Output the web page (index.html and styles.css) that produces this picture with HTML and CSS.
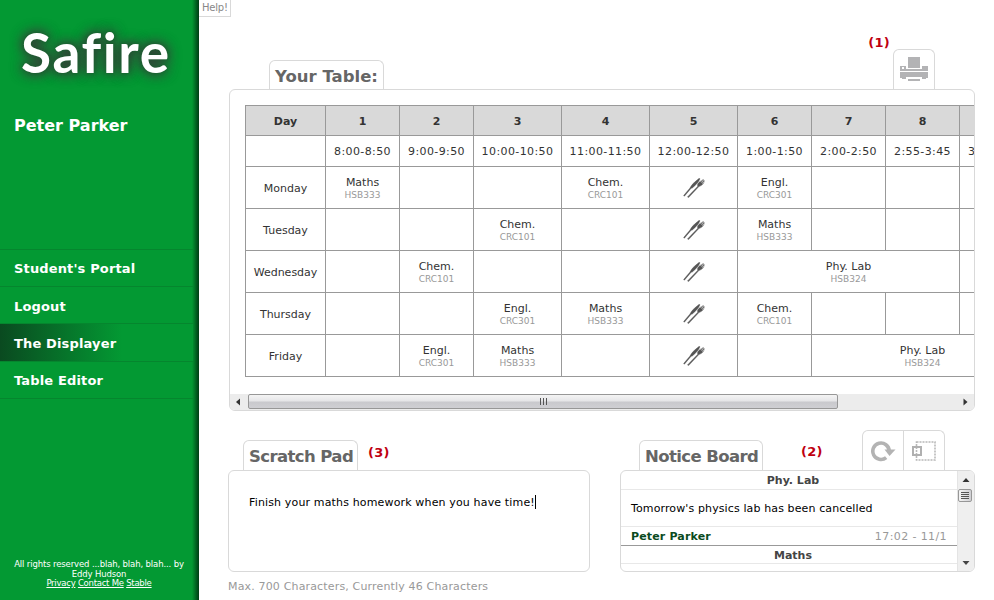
FILE: index.html
```html
<!DOCTYPE html>
<html lang="en">
<head>
<meta charset="utf-8">
<title>Safire - The Displayer</title>
<link rel="stylesheet" href="styles.css">
</head>
<body>
<svg class="defs" aria-hidden="true">
  <symbol id="cutlery" viewBox="0 0 22 20">
    <path d="M0.600 17.600 L6.800 10.200 Q8.500 6 16.200 0.200 L17 0.800 Q15.500 5 9.300 10 L8.200 10.200 L1.400 18.200 Z" fill="#555" stroke="#555" stroke-width=".4"/>
    <path d="M4.500 18.900 L14.600 8.400 Q14.300 5.200 16.800 3.600 L20.300 1.600 L21.300 2.800 Q20.800 7 15.900 8.600 L5.600 19.600 Z" fill="#555" stroke="#555" stroke-width=".4"/>
    <path d="M17.300 3.600 L20.200 1.600 M18.300 4.500 L21 2.400 M19 5.500 L21.200 4" stroke="#ccc" stroke-width=".8"/>
  </symbol>
</svg>
<aside class="sidebar">
  <div class="logo">Safire</div>
  <div class="user">Peter Parker</div>
  <nav class="menu">
    <a class="item"><span>Student's Portal</span></a>
    <a class="item low"><span>Logout</span></a>
    <a class="item low active"><span>The Displayer</span></a>
    <a class="item"><span>Table Editor</span></a>
  </nav>
  <footer class="legal">
    <div>All rights reserved ...blah, blah, blah... by</div>
    <div>Eddy Hudson</div>
    <div class="links"><u>Privacy</u> <u>Contact Me</u> <u>Stable</u></div>
  </footer>
</aside>
<main class="main">
  <div class="help">Help!</div>
  <section class="timetable">
    <header class="head">
      <h2 class="tab">Your Table:</h2>
      <span class="mark">(1)</span>
      <div class="tools">
        <span class="tool">
          <svg width="28" height="24" viewBox="0 0 28 24" fill="#b3b3b5" shape-rendering="crispEdges"><path d="M8 0h12v11H8z"/><path fill-rule="evenodd" d="M0 9h6v3h16V9h6v5H0zM2 10v2h2v-2z"/><path d="M0 15h28v6h-2v1h-4v-2H6v2H2v-1H0z"/><path d="M8 22h12v2H8z"/></svg>
        </span>
      </div>
    </header>
    <div class="panel">
      <div class="view">
        <table class="grid">
          <colgroup><col class="day"><col><col><col class="wide"><col class="wide"><col class="wide"><col><col><col><col></colgroup>
          <tr class="nums"><th>Day</th><th>1</th><th>2</th><th>3</th><th>4</th><th>5</th><th>6</th><th>7</th><th>8</th><th></th></tr>
          <tr class="times"><td></td><td>8:00-8:50</td><td>9:00-9:50</td><td>10:00-10:50</td><td>11:00-11:50</td><td>12:00-12:50</td><td>1:00-1:50</td><td>2:00-2:50</td><td>2:55-3:45</td><td>3:50-4:40</td></tr>
          <tr><td>Monday</td><td>Maths<small>HSB333</small></td><td></td><td></td><td>Chem.<small>CRC101</small></td><td><svg class="food"><use href="#cutlery"/></svg></td><td>Engl.<small>CRC301</small></td><td></td><td></td><td></td></tr>
          <tr><td>Tuesday</td><td></td><td></td><td>Chem.<small>CRC101</small></td><td></td><td><svg class="food"><use href="#cutlery"/></svg></td><td>Maths<small>HSB333</small></td><td></td><td></td><td></td></tr>
          <tr><td>Wednesday</td><td></td><td>Chem.<small>CRC101</small></td><td></td><td></td><td><svg class="food"><use href="#cutlery"/></svg></td><td colspan="3">Phy. Lab<small>HSB324</small></td><td></td></tr>
          <tr><td>Thursday</td><td></td><td></td><td>Engl.<small>CRC301</small></td><td>Maths<small>HSB333</small></td><td><svg class="food"><use href="#cutlery"/></svg></td><td>Chem.<small>CRC101</small></td><td></td><td></td><td></td></tr>
          <tr class="last"><td>Friday</td><td></td><td>Engl.<small>CRC301</small></td><td>Maths<small>HSB333</small></td><td></td><td><svg class="food"><use href="#cutlery"/></svg></td><td></td><td colspan="3">Phy. Lab<small>HSB324</small></td></tr>
        </table>
      </div>
      <div class="hbar">
        <svg width="18" height="16"><path d="M10 4.500v7L6 8z" fill="#333"/></svg>
        <div class="thumb"><i></i><i></i><i></i></div>
        <svg width="18" height="16"><path d="M7.500 4.500v7L11.500 8z" fill="#333"/></svg>
      </div>
    </div>
  </section>
  <div class="lower">
    <section class="scratch">
      <header class="head">
        <h2 class="tab">Scratch Pad</h2>
        <span class="mark">(3)</span>
      </header>
      <div class="pad"><span>Finish your maths homework when you have time!</span><i class="caret"></i></div>
      <div class="count">Max. 700 Characters, Currently 46 Characters</div>
    </section>
    <section class="notice">
      <header class="head">
        <h2 class="tab">Notice Board</h2>
        <span class="mark">(2)</span>
        <div class="tools">
          <span class="tool">
            <svg width="26" height="22" viewBox="0 0 26 22"><path d="M16.200 17.600A8.200 8.200 0 1 1 19.200 11" fill="none" stroke="#b3b3b3" stroke-width="3.600"/><path d="M14.500 9.500h11L19.500 16z" fill="#b3b3b3"/></svg>
          </span>
          <span class="tool">
            <svg width="26" height="22" viewBox="0 0 26 22" fill="none" stroke="#b8b8b8"><path d="M5.500 2h18.500v18H5.500z" stroke-width="1.600" stroke-dasharray="2 1"/><path d="M2 7h8v8H2z" stroke="#b0b0b0" stroke-width="2"/></svg>
          </span>
        </div>
      </header>
      <div class="board">
        <div class="posts">
          <h3>Phy. Lab</h3>
          <p>Tomorrow's physics lab has been cancelled</p>
          <div class="by"><b>Peter Parker</b><time>17:02 - 11/1</time></div>
          <h3 class="next">Maths</h3>
        </div>
        <div class="vbar">
          <svg width="17" height="18"><path d="M4.500 11h7L8 7z" fill="#333"/></svg>
          <div class="vthumb"><i></i><i></i><i></i><i></i></div>
          <svg class="down" width="17" height="18"><path d="M4.500 8h7L8 12z" fill="#444"/></svg>
        </div>
      </div>
    </section>
  </div>
</main>
</body>
</html>
```
FILE: styles.css
```css
* { box-sizing: border-box; }
body {
  margin: 0;
  width: 994px;
  height: 600px;
  overflow: hidden;
  display: flex;
  background: #fff;
  color: #333;
  font: 11px/14px "DejaVu Sans", sans-serif;
}
h2, h3, p { margin: 0; }
.defs { position: absolute; width: 0; height: 0; }

.sidebar {
  width: 199px;
  height: 600px;
  display: flex;
  flex-direction: column;
  color: #fff;
  background: linear-gradient(to right, transparent 192px, #00551d 197px, #003c14 199px), #039933;
}
.logo {
  height: 110px;
  padding-left: 21px;
  font: bold 55px/105px Lato, sans-serif;
  font-variant-ligatures: none;
  letter-spacing: 1.6px;
  white-space: nowrap;
  text-shadow: 0 0 3px #1a5c2e, 0 0 12px #333, 0 0 14px #444;
}
.user { height: 139px; padding-left: 14px; font-size: 16px; line-height: 31px; font-weight: bold; }
.menu { width: 193px; border-bottom: 1px solid #05862e; }
.item {
  display: block;
  height: 37px;
  padding-left: 14px;
  border-top: 1px solid #05862e;
  font-size: 13px;
  line-height: 37px;
  letter-spacing: .15px;
  font-weight: bold;
}
.item.low { line-height: 39px; }
.item.active { height: 38px; background: linear-gradient(to right, #0a4a20, #039933 122px); }
.legal { margin-top: auto; height: 41px; width: 198px; text-align: center; font-size: 8.5px; line-height: 10px; letter-spacing: -.13px; }
.links { line-height: 9px; letter-spacing: -.25px; }

.main { width: 795px; }
.help {
  width: 32px;
  height: 17px;
  padding-left: 3px;
  border: solid #d9d9d9;
  border-width: 0 1px 1px 0;
  font-size: 10px;
  line-height: 15px;
  letter-spacing: -.2px;
  color: #888;
}
.timetable { width: 746px; margin-left: 30px; }
.head { display: flex; align-items: flex-end; }
.timetable .head { height: 72px; padding: 0 40px; }
.tab {
  height: 30px;
  padding-left: 5px;
  border: 1px solid #d9d9d9;
  border-bottom: 0;
  border-radius: 6px 6px 0 0;
  font-size: 16.5px;
  line-height: 31px;
  letter-spacing: -.6px;
  color: #666;
  white-space: nowrap;
}
.timetable .tab { width: 115px; height: 29px; letter-spacing: 0; }
.mark { font-size: 13px; line-height: 16px; letter-spacing: .3px; font-weight: bold; color: #c00010; }
.timetable .mark { margin: 0 3px 38px auto; }
.tools { display: flex; height: 40px; border: 1px solid #d9d9d9; border-bottom: 0; border-radius: 6px 6px 0 0; }
.tool { width: 40px; display: flex; justify-content: center; align-items: center; }
.timetable .tool { padding-bottom: 1px; }
.tool + .tool { width: 41px; border-left: 1px solid #d9d9d9; }
.panel { height: 322px; border: 1px solid #d9d9d9; border-radius: 6px; overflow: hidden; }
.view { height: 304px; padding: 15px 0 0 15px; overflow: hidden; }
.grid { width: 788px; table-layout: fixed; border-collapse: separate; border-spacing: 0; text-align: center; }
col { width: 74px; }
.day { width: 80px; }
.wide { width: 88px; }
.grid th, .grid td { padding: 1px 0 0; border: solid #999; border-width: 1px 0 0 1px; white-space: nowrap; }
.grid tr { height: 42px; }
.grid .nums { height: 30px; }
.grid .nums th { padding-top: 2px; background: #d9d9d9; }
.grid tr:not(.times) td:first-child { padding-top: 2px; }
.grid .times { height: 31px; letter-spacing: .4px; }
.grid .last td { height: 43px; border-bottom-width: 1px; }
.grid small { display: block; font-size: 9px; line-height: 11px; color: #999; }
.food { display: block; width: 22px; height: 20px; margin: 0 auto; }
.hbar { height: 16px; display: flex; background: #ececec; }
.thumb {
  width: 590px;
  height: 15px;
  margin-right: auto;
  display: flex;
  justify-content: center;
  align-items: center;
  gap: 2px;
  border: 1px solid #979797;
  border-radius: 2px;
  background: linear-gradient(#f4f4f4, #e6e6e8 45%, #c9c9cd 55%, #cfcfd3);
}
.thumb i { width: 1px; height: 7px; background: #555; }

.lower { display: flex; margin-left: 29px; gap: 30px; }
.lower .head { height: 59px; }
.scratch { width: 362px; }
.scratch .head { padding-left: 15px; }
.scratch .tab { width: 115px; }
.scratch .mark { margin: 0 0 9px 10px; }
.pad { display: flex; height: 102px; padding: 24px 0 0 20px; border: 1px solid #d9d9d9; border-radius: 6px; line-height: 15px; letter-spacing: .15px; color: #000; }
.caret { width: 1px; height: 14px; background: #000; }
.count { margin-top: 8px; letter-spacing: .16px; color: #999; }
.notice { width: 355px; }
.notice .head { padding: 0 30px 0 19px; }
.notice .tab { width: 124px; }
.notice .mark { margin: 0 0 10px 38px; }
.notice .tools { width: 83px; margin-left: auto; }
.board { display: flex; height: 102px; border: 1px solid #d9d9d9; border-radius: 6px; overflow: hidden; }
.posts { width: 336px; height: 100px; overflow: hidden; color: #000; }
.posts h3 { padding-left: 8px; height: 19px; border-bottom: 1px solid #e8e8e8; font-size: 11px; line-height: 19px; text-align: center; color: #444; }
.posts .next { height: 18px; }
.posts p { height: 37px; padding: 0 10px; border-bottom: 1px solid #e8e8e8; line-height: 37px; letter-spacing: .12px; }
.by { display: flex; justify-content: space-between; height: 19px; padding: 0 10px; border-bottom: 1px solid #999; line-height: 19px; }
.by b { letter-spacing: .15px; color: #0a4a20; }
.by time { letter-spacing: .4px; color: #999; }
.vbar { width: 17px; display: flex; flex-direction: column; background: #efefef; border-left: 1px solid #e4e4e4; }
.vthumb {
  width: 14px;
  height: 13px;
  display: flex;
  flex-direction: column;
  justify-content: center;
  align-items: center;
  gap: 1px;
  border: 1px solid #979797;
  border-radius: 2px;
  background: linear-gradient(to right, #f4f4f4, #cfcfd3);
}
.vthumb i { width: 8px; height: 1px; background: #555; }
.down { margin-top: auto; }
```
